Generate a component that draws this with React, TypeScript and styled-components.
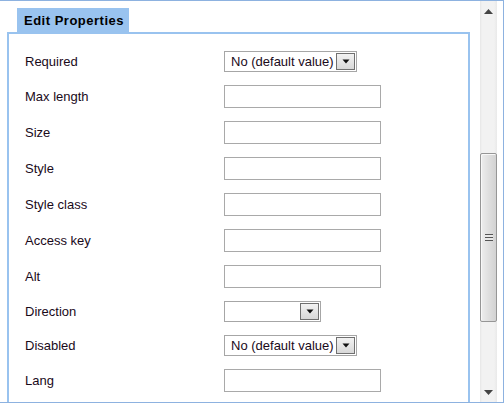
import React from 'react'
import styled, { createGlobalStyle } from 'styled-components'

const GlobalStyle = createGlobalStyle`
  html, body {
    margin: 0;
    padding: 0;
    background: #fff;
  }
  body {
    font-family: "Liberation Sans", Arial, sans-serif;
    font-size: 13px;
    color: #000;
  }
`

const Frame = styled.div`
  width: 504px;
  height: 403px;
  box-sizing: border-box;
  border-top: 1px solid #8db2e0;
  border-right: 1px solid #8db2e0;
  border-bottom: 1px solid #8db2e0;
  display: flex;
  overflow: hidden;
  background: #fff;
`

const Content = styled.div`
  flex: 1;
  padding: 7px 10px 0 7px;
  overflow: hidden;
`

const Tab = styled.div`
  display: inline-flex;
  align-items: center;
  height: 24px;
  margin-left: 10px;
  padding: 0 5px 0 7px;
  background: #99c3ef;
  font-weight: bold;
  font-size: 13px;
  letter-spacing: 0.5px;
  color: #000;
`

const Panel = styled.div`
  border: 2px solid #99c3ef;
  padding: 17px 0 60px 16px;
  display: grid;
  grid-template-columns: 199px auto;
  row-gap: 13px;
  align-items: center;
`

const Label = styled.div`
  font-size: 13px;
  color: #1a0a1a;
`

const TextInput = styled.input`
  box-sizing: border-box;
  width: 157px;
  height: 23px;
  margin: 0;
  border: 1px solid #a9a9a9;
  background: #fff;
  justify-self: start;
`

const SelectBox = styled.div<{ $width: number }>`
  box-sizing: border-box;
  width: ${({ $width }) => $width}px;
  height: 21px;
  border: 1px solid #a6a6a6;
  display: flex;
  align-items: center;
  justify-self: start;
  background: #fff;
  padding: 1px;
`

const SelectText = styled.span`
  flex: 1;
  padding-left: 5px;
  font-size: 13px;
  color: #1a0a1a;
  white-space: nowrap;
`

const DropButton = styled.span`
  box-sizing: border-box;
  width: 19px;
  height: 17px;
  border: 1px solid #707070;
  background: linear-gradient(#f2f2f2, #d8d8d8);
  display: flex;
  align-items: center;
  justify-content: center;
`

const ScrollBar = styled.div`
  width: 17px;
  margin-right: 6px;
  display: flex;
  flex-direction: column;
  background: linear-gradient(90deg, #e6e6e6 0, #f2f2f2 2px, #f2f2f2 14px, #e9e9e9 17px);
`

const ArrowButton = styled.div`
  height: 20px;
  display: flex;
  align-items: center;
  justify-content: center;
`

const Track = styled.div`
  flex: 1;
  display: flex;
  flex-direction: column;
  padding-top: 132px;
`

const Thumb = styled.div`
  box-sizing: border-box;
  height: 169px;
  border: 1px solid #969696;
  border-radius: 2px;
  background: linear-gradient(90deg, #eeeeee 0, #e2e2e2 40%, #d2d2d2 100%);
  box-shadow: inset 1px 1px 0 #f8f8f8;
  display: flex;
  align-items: center;
  justify-content: center;
`

const Grip = styled.div`
  width: 8px;
  height: 7px;
  background: repeating-linear-gradient(#555 0, #555 1px, #e8e8e8 1px, #e8e8e8 3px);
`

const Spacer = styled.div`
  flex: 1;
`

const DownTriangle = () => (
  <svg width="8" height="5" viewBox="0 0 8 5">
    <path d="M0.5 0.5 H7.5 L4 4.5 Z" fill="#111" />
  </svg>
)

const UpArrow = () => (
  <svg width="9" height="5" viewBox="0 0 9 5">
    <path d="M0 5 H9 L4.5 0 Z" fill="#444" />
  </svg>
)

const DownArrow = () => (
  <svg width="9" height="5" viewBox="0 0 9 5">
    <path d="M0 0 H9 L4.5 5 Z" fill="#444" />
  </svg>
)

type Field =
  | { label: string; kind: 'input' }
  | { label: string; kind: 'select'; value: string; width: number }

const fields: Field[] = [
  { label: 'Required', kind: 'select', value: 'No (default value)', width: 133 },
  { label: 'Max length', kind: 'input' },
  { label: 'Size', kind: 'input' },
  { label: 'Style', kind: 'input' },
  { label: 'Style class', kind: 'input' },
  { label: 'Access key', kind: 'input' },
  { label: 'Alt', kind: 'input' },
  { label: 'Direction', kind: 'select', value: '', width: 97 },
  { label: 'Disabled', kind: 'select', value: 'No (default value)', width: 133 },
  { label: 'Lang', kind: 'input' },
]

const App: React.FC = () => {
  return (
    <>
      <GlobalStyle />
      <Frame>
        <Content>
          <Tab>Edit Properties</Tab>
          <Panel>
            {fields.map((f) => (
              <React.Fragment key={f.label}>
                <Label>{f.label}</Label>
                {f.kind === 'input' ? (
                  <TextInput type="text" />
                ) : (
                  <SelectBox $width={f.width}>
                    <SelectText>{f.value}</SelectText>
                    <DropButton>
                      <DownTriangle />
                    </DropButton>
                  </SelectBox>
                )}
              </React.Fragment>
            ))}
          </Panel>
        </Content>
        <ScrollBar>
          <ArrowButton>
            <UpArrow />
          </ArrowButton>
          <Track>
            <Thumb>
              <Grip />
            </Thumb>
            <Spacer />
          </Track>
          <ArrowButton>
            <DownArrow />
          </ArrowButton>
        </ScrollBar>
      </Frame>
    </>
  )
}

export default App
